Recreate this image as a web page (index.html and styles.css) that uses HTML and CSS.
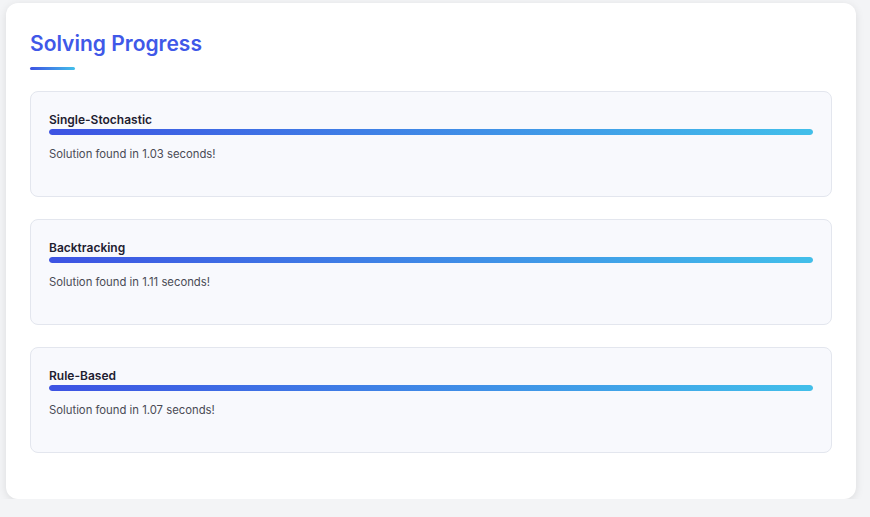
FILE: index.html
```html
<!DOCTYPE html>
<html lang="en">
<head>
<meta charset="utf-8">
<title>Solving Progress</title>
<link rel="stylesheet" href="styles.css">
</head>
<body>
<main class="card">
  <h2 class="title">Solving Progress</h2>
  <div class="title-rule"></div>
  <section class="algo">
    <div class="algo-name">Single-Stochastic</div>
    <div class="bar"><div class="bar-fill" style="width:100%"></div></div>
    <p class="algo-result">Solution found in 1.03 seconds!</p>
  </section>
  <section class="algo">
    <div class="algo-name">Backtracking</div>
    <div class="bar"><div class="bar-fill" style="width:100%"></div></div>
    <p class="algo-result">Solution found in 1.11 seconds!</p>
  </section>
  <section class="algo">
    <div class="algo-name">Rule-Based</div>
    <div class="bar"><div class="bar-fill" style="width:100%"></div></div>
    <p class="algo-result">Solution found in 1.07 seconds!</p>
  </section>
</main>
</body>
</html>
```
FILE: styles.css
```css
* { box-sizing: border-box; }
html, body { margin: 0; padding: 0; }
body {
  background: #f3f4f6;
  font-family: Inter, "Noto Sans", "Liberation Sans", sans-serif;
  padding: 3px 0 0 6px;
}
.card {
  width: 850px;
  background: #ffffff;
  border-radius: 12px;
  box-shadow: 0 2px 8px rgba(0, 0, 0, 0.10);
  padding: 27px 24px 46px;
}
.title {
  margin: 0;
  font-size: 21px;
  line-height: 28px;
  font-weight: 600;
  color: #4058e8;
}
.title-rule {
  width: 45px;
  height: 3px;
  margin-top: 9px;
  margin-bottom: 21px;
  border-radius: 2px;
  background: linear-gradient(90deg, #3d53e3, #42bfea);
}
.algo {
  background: #f8f9fd;
  border: 1px solid #e3e6ee;
  border-radius: 8px;
  padding: 20px 18px 35px;
  margin-bottom: 22px;
}
.algo:last-child { margin-bottom: 0; }
.algo-name {
  font-size: 12px;
  line-height: 15px;
  font-weight: 600;
  color: #1e2030;
}
.bar {
  margin-top: 2px;
  height: 6px;
  border-radius: 3px;
  background: #e5e7eb;
  overflow: hidden;
}
.bar-fill {
  height: 100%;
  border-radius: 3px;
  background: linear-gradient(90deg, #3d53e3, #42bfea);
}
.algo-result {
  margin: 12px 0 0;
  font-size: 11.3px;
  line-height: 14px;
  color: #4a4b55;
}
```
